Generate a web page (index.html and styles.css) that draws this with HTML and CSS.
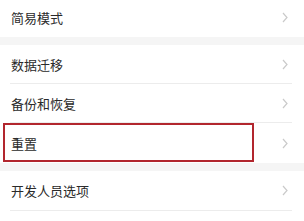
FILE: index.html
```html
<!DOCTYPE html>
<html lang="zh-CN">
<head>
    <meta charset="UTF-8">
    <title>设置</title>
    <link rel="stylesheet" href="styles.css">
</head>
<body>
<div class="settings">
    <!-- 第一组 -->
    <div class="group first">
        <div class="row">
            <div class="row-inner">
                <span class="label">简易模式</span>
                <svg class="chevron" width="6" height="11" viewBox="0 0 6 11"><polyline points="1,1 5,5.5 1,10" /></svg>
            </div>
        </div>
    </div>

    <!-- 第二组 -->
    <div class="group">
        <div class="row">
            <div class="row-inner line">
                <span class="label">数据迁移</span>
                <svg class="chevron" width="6" height="11" viewBox="0 0 6 11"><polyline points="1,1 5,5.5 1,10" /></svg>
            </div>
        </div>
        <div class="row">
            <div class="row-inner line">
                <span class="label">备份和恢复</span>
                <svg class="chevron" width="6" height="11" viewBox="0 0 6 11"><polyline points="1,1 5,5.5 1,10" /></svg>
            </div>
        </div>
        <div class="row tall">
            <div class="row-inner">
                <span class="label">重置</span>
                <svg class="chevron" width="6" height="11" viewBox="0 0 6 11"><polyline points="1,1 5,5.5 1,10" /></svg>
            </div>
            <div class="highlight"></div>
        </div>
    </div>

    <!-- 第三组 -->
    <div class="group">
        <div class="row tall">
            <div class="row-inner line">
                <span class="label">开发人员选项</span>
                <svg class="chevron" width="6" height="11" viewBox="0 0 6 11"><polyline points="1,1 5,5.5 1,10" /></svg>
            </div>
        </div>
    </div>
</div>
</body>
</html>
```

FILE: styles.css
```css
body {
    margin: 0;
    padding: 0;
    background-color: #fff;
    font-family: "Noto Sans CJK SC", "Noto Sans", sans-serif;
    overflow: hidden;
}

.settings {
    display: flex;
    flex-direction: column;
    gap: 8px;
    background-color: #f5f5f5;
}

.group {
    background-color: #fff;
}

.group.first {
    margin-top: -2px;
}

.row {
    position: relative;
    height: 39px;
}

.row.tall {
    height: 40px;
}

.row-inner {
    display: flex;
    align-items: center;
    justify-content: space-between;
    height: 100%;
    box-sizing: border-box;
    margin: 0 12px 0 10px;
    padding: 0 4px 0 1px;
}

.row-inner.line {
    border-bottom: 1px solid #ececec;
}

.label {
    font-size: 13px;
    color: #2a2a2a;
}

.chevron polyline {
    fill: none;
    stroke: #cacaca;
    stroke-width: 1.2;
}

/* khung đỏ đánh dấu */
.highlight {
    position: absolute;
    left: 3px;
    top: 0;
    width: 251px;
    height: 39px;
    box-sizing: border-box;
    border: 2px solid #b2262e;
}
```
